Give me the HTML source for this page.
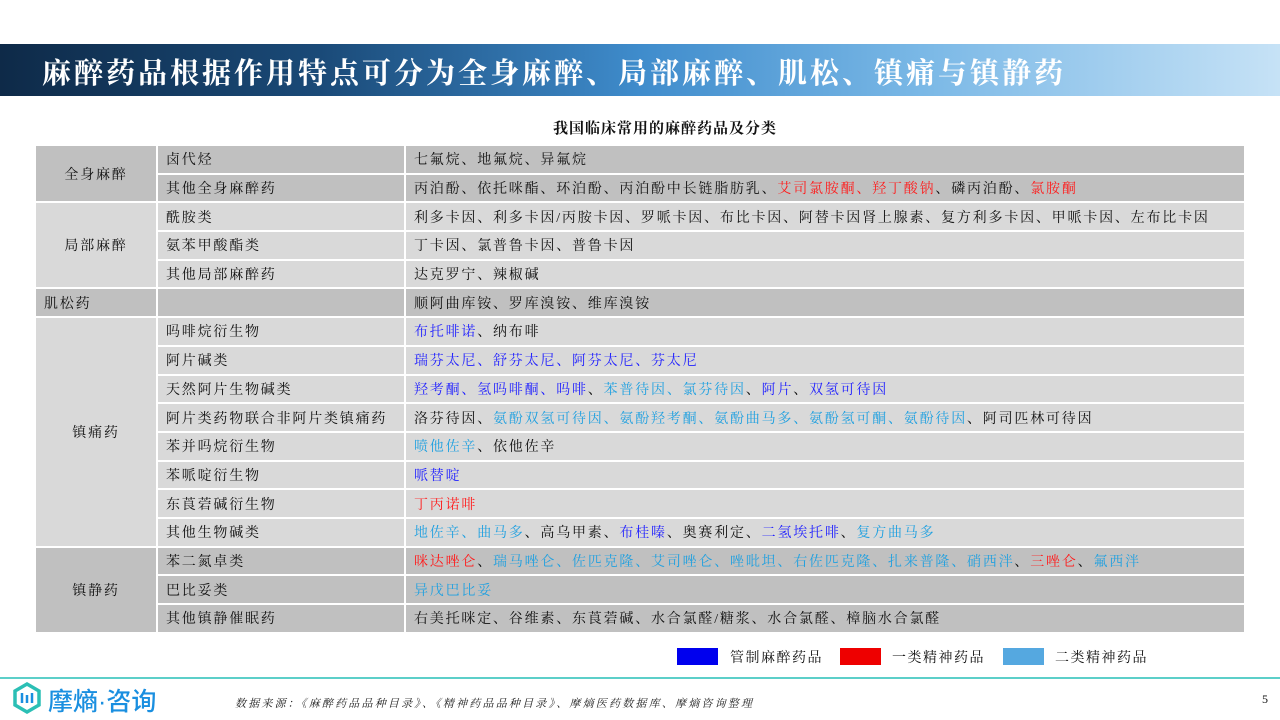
<!DOCTYPE html>
<html><head><meta charset="utf-8"><style>
*{margin:0;padding:0;box-sizing:border-box}
body{width:1280px;height:720px;background:#fff;position:relative;overflow:hidden;font-family:"Liberation Serif","Noto Serif CJK SC",serif;color:#111}
.bar{position:absolute;left:0;top:44px;width:1280px;height:52px;background:linear-gradient(90deg,#0e2a48 0%,#1a4a78 25%,#3f8ccc 50%,#7ab8e6 72%,#c6e2f6 100%)}
.bar h1{position:absolute;left:42px;top:7px;font-size:29px;font-weight:700;color:#fff;letter-spacing:3px;white-space:nowrap}
.sub{position:absolute;left:0;width:1330px;text-align:center;top:117px;font-size:15px;font-weight:700;letter-spacing:1px}
table{position:absolute;left:34px;top:144px;width:1212px;border-collapse:collapse;font-size:14px;letter-spacing:1.8px}
td{height:28.7px;border:2px solid #fff;padding:0 0 0 8px;white-space:nowrap;vertical-align:middle}
td.c0{width:122px;text-align:center;padding:0}
td.c1{width:248px}
.d td{background:#c0c0c0}
.l td{background:#d9d9d9}
.b{color:#1e1eff}.r{color:#ff1a1a}.s{color:#1fa0e0}
.leg{position:absolute;top:648px;height:17px;width:41px}
.lt{position:absolute;top:647px;font-size:14px;letter-spacing:1.5px}
.line{position:absolute;left:0;top:677px;width:1280px;height:2px;background:#5ccfc9}
.logo{position:absolute;left:48px;top:682px;font-family:"Liberation Sans","Noto Sans CJK SC",sans-serif;font-size:25px;color:#1a8fe0;font-weight:500}
.src{position:absolute;left:235px;top:695px;font-size:11px;font-style:italic;letter-spacing:2.2px;color:#222}
.pg{position:absolute;left:1262px;top:692px;font-size:12px}
</style></head><body>
<div class="bar"><h1>麻醉药品根据作用特点可分为全身麻醉、局部麻醉、肌松、镇痛与镇静药</h1></div>
<div class="sub">我国临床常用的麻醉药品及分类</div>
<table>
<tr class="d"><td class="c0" rowspan="2">全身麻醉</td><td class="c1">卤代烃</td><td>七氟烷、地氟烷、异氟烷</td></tr>
<tr class="d"><td class="c1">其他全身麻醉药</td><td>丙泊酚、依托咪酯、环泊酚、丙泊酚中长链脂肪乳、<span class="r">艾司氯胺酮、羟丁酸钠</span>、磷丙泊酚、<span class="r">氯胺酮</span></td></tr>
<tr class="l"><td class="c0" rowspan="3">局部麻醉</td><td class="c1">酰胺类</td><td>利多卡因、利多卡因/丙胺卡因、罗哌卡因、布比卡因、阿替卡因肾上腺素、复方利多卡因、甲哌卡因、左布比卡因</td></tr>
<tr class="l"><td class="c1">氨苯甲酸酯类</td><td>丁卡因、氯普鲁卡因、普鲁卡因</td></tr>
<tr class="l"><td class="c1">其他局部麻醉药</td><td>达克罗宁、辣椒碱</td></tr>
<tr class="d"><td class="c0" style="text-align:left;padding-left:8px">肌松药</td><td class="c1"></td><td>顺阿曲库铵、罗库溴铵、维库溴铵</td></tr>
<tr class="l"><td class="c0" rowspan="8">镇痛药</td><td class="c1">吗啡烷衍生物</td><td><span class="b">布托啡诺</span>、纳布啡</td></tr>
<tr class="l"><td class="c1">阿片碱类</td><td class="b">瑞芬太尼、舒芬太尼、阿芬太尼、芬太尼</td></tr>
<tr class="l"><td class="c1">天然阿片生物碱类</td><td><span class="b">羟考酮、氢吗啡酮、吗啡</span>、<span class="s">苯普待因、氯芬待因</span>、<span class="b">阿片</span>、<span class="b">双氢可待因</span></td></tr>
<tr class="l"><td class="c1">阿片类药物联合非阿片类镇痛药</td><td>洛芬待因、<span class="s">氨酚双氢可待因、氨酚羟考酮、氨酚曲马多、氨酚氢可酮、氨酚待因</span>、阿司匹林可待因</td></tr>
<tr class="l"><td class="c1">苯并吗烷衍生物</td><td><span class="s">喷他佐辛</span>、依他佐辛</td></tr>
<tr class="l"><td class="c1">苯哌啶衍生物</td><td class="b">哌替啶</td></tr>
<tr class="l"><td class="c1">东莨菪碱衍生物</td><td class="r">丁丙诺啡</td></tr>
<tr class="l"><td class="c1">其他生物碱类</td><td><span class="s">地佐辛、曲马多</span>、高乌甲素、<span class="b">布桂嗪</span>、奥赛利定、<span class="b">二氢埃托啡</span>、<span class="s">复方曲马多</span></td></tr>
<tr class="d"><td class="c0" rowspan="3">镇静药</td><td class="c1">苯二氮卓类</td><td><span class="r">咪达唑仑</span>、<span class="s">瑞马唑仑、佐匹克隆、艾司唑仑、唑吡坦、右佐匹克隆、扎来普隆、硝西泮</span>、<span class="r">三唑仑</span>、<span class="s">氟西泮</span></td></tr>
<tr class="d"><td class="c1">巴比妥类</td><td class="s">异戊巴比妥</td></tr>
<tr class="d"><td class="c1">其他镇静催眠药</td><td>右美托咪定、谷维素、东莨菪碱、水合氯醛/糖浆、水合氯醛、樟脑水合氯醛</td></tr>
</table>
<div class="leg" style="left:677px;background:#0000ee"></div><div class="lt" style="left:730px">管制麻醉药品</div>
<div class="leg" style="left:840px;background:#ee0000"></div><div class="lt" style="left:892px">一类精神药品</div>
<div class="leg" style="left:1003px;background:#55a8e0"></div><div class="lt" style="left:1055px">二类精神药品</div>
<div class="line"></div>
<svg style="position:absolute;left:10px;top:681px" width="34" height="34" viewBox="0 0 34 34"><path d="M17 3 L29 10 L29 24 L17 31 L5 24 L5 10 Z" fill="none" stroke="#2bbfb5" stroke-width="3.5"/><path d="M12 12v10M17 14v8M22 12v10" stroke="#1a8fe0" stroke-width="2.5"/></svg>
<div class="logo">摩熵·咨询</div>
<div class="src">数据来源：《麻醉药品品种目录》、《精神药品品种目录》、摩熵医药数据库、摩熵咨询整理</div>
<div class="pg">5</div>
</body></html>
